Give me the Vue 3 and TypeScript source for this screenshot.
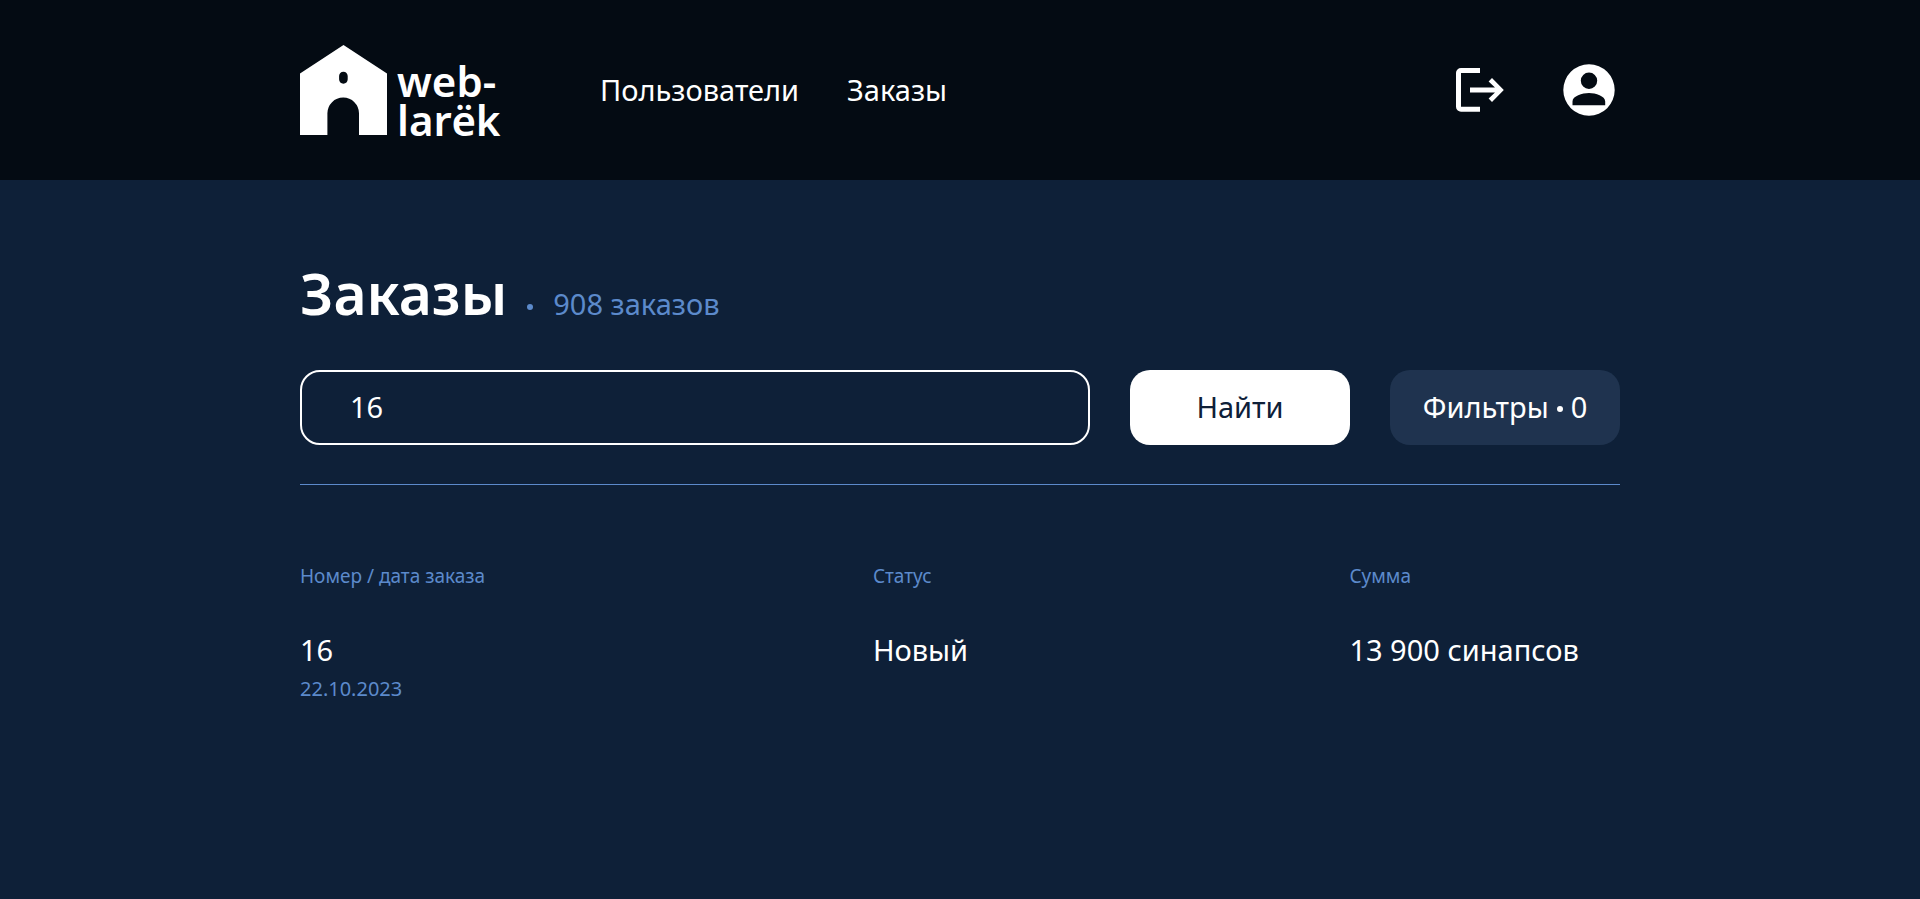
<script setup lang="ts">
import { ref } from 'vue'

interface Order {
  id: number
  date: string
  status: string
  sum: string
}

const query = ref('16')
const filtersCount = ref(0)
const total = '908 заказов'
const orders: Order[] = [
  { id: 16, date: '22.10.2023', status: 'Новый', sum: '13 900 синапсов' },
]
</script>

<template>
  <div class="page">
    <header class="header">
      <div class="container header-row">
        <a href="#" class="logo">
          <svg class="house" viewBox="0 0 87 90" aria-hidden="true">
            <path
              fill="currentColor"
              fill-rule="evenodd"
              d="M0 28.4 43.5 0 87 28.4V90H59V68.3a15.8 15.8 0 0 0-31.6 0V90H0ZM43.4 26.7c-2.5 0-4.3 1.9-4.3 4.4v3.2c0 2.5 1.8 4.4 4.3 4.4s4.3-1.9 4.3-4.4v-3.2c0-2.5-1.8-4.4-4.3-4.4Z"
            />
          </svg>
          <span class="logo-text">web-<br />larёk</span>
        </a>
        <nav class="nav">
          <a href="#users">Пользователи</a>
          <a href="#orders">Заказы</a>
        </nav>
        <div class="actions">
          <button type="button" class="icon-button" aria-label="Выйти">
            <svg viewBox="0 0 62 62" aria-hidden="true">
              <path
                fill="currentColor"
                d="M31 9v5H12v33.8h19v5H12a5 5 0 0 1-5-5V14a5 5 0 0 1 5-5ZM43 19l11.8 12L43 43l-3.4-3.5 6.4-5.9H21v-5.2h25l-6.4-5.9Z"
              />
            </svg>
          </button>
          <a href="#profile" class="icon-button" aria-label="Профиль">
            <svg viewBox="0 0 62 62" aria-hidden="true">
              <path
                fill="currentColor"
                fill-rule="evenodd"
                d="M31 5.300a25.700 25.700 0 1 0 0 51.400A25.700 25.700 0 0 0 31 5.300ZM31 13.500a8.200 8.200 0 1 1 0 16.400 8.200 8.200 0 0 1 0-16.400ZM14.500 46.300V42.500C14.500 37 24.300 34 31 34s16.200 3 16.200 8.500v3.800Z"
              />
            </svg>
          </a>
        </div>
      </div>
    </header>

    <main class="container main">
      <div class="heading">
        <h1>Заказы</h1>
        <span class="total"><span class="dot"></span>{{ total }}</span>
      </div>

      <form class="search" @submit.prevent>
        <input v-model="query" type="text" aria-label="Поиск заказа" />
        <button type="submit" class="find">Найти</button>
        <button type="button" class="filters">Фильтры<span class="dot"></span>{{ filtersCount }}</button>
      </form>

      <table class="orders">
        <thead>
          <tr>
            <th scope="col" class="col-number">Номер / дата заказа</th>
            <th scope="col" class="col-status">Статус</th>
            <th scope="col">Сумма</th>
          </tr>
        </thead>
        <tbody>
          <tr v-for="order in orders" :key="order.id">
            <td>
              <div>{{ order.id }}</div>
              <div class="date">{{ order.date }}</div>
            </td>
            <td>{{ order.status }}</td>
            <td>{{ order.sum }}</td>
          </tr>
        </tbody>
      </table>
    </main>
  </div>
</template>

<style>
body {
  margin: 0;
  background: #0e2038;
}
</style>

<style scoped>
.page {
  min-height: 100vh;
  background: #0e2038;
  color: #fff;
  font-family: "Noto Sans", "Open Sans", sans-serif;
  font-size: 29px;
  line-height: 40px;
}

a {
  color: inherit;
  text-decoration: none;
}

button,
input {
  box-sizing: border-box;
  margin: 0;
  font: inherit;
}

.container {
  box-sizing: border-box;
  width: 100%;
  max-width: 1320px;
  margin: 0 auto;
}

.header {
  background: #040b13;
}

.header-row {
  display: flex;
  align-items: center;
  min-height: 180px;
}

.logo {
  display: flex;
  align-items: flex-end;
  gap: 10px;
  width: 300px;
}

.house {
  display: block;
  width: 87px;
  height: 90px;
}

.logo-text {
  margin-bottom: -4px;
  font-size: 42px;
  font-weight: 600;
  line-height: 39px;
}

.nav {
  display: flex;
  gap: 48px;
}

.actions {
  display: flex;
  gap: 47px;
  margin-left: auto;
}

.icon-button {
  padding: 0;
  border: 0;
  background: none;
  color: #fff;
  cursor: pointer;
}

.icon-button svg {
  display: block;
  width: 62px;
  height: 62px;
}

.main {
  padding: 78px 0;
}

.heading {
  display: flex;
  align-items: baseline;
  gap: 20px;
}

h1 {
  margin: 0;
  font-size: 57px;
  font-weight: 600;
  line-height: 70px;
}

.dot {
  display: inline-block;
  width: 6px;
  height: 6px;
  border-radius: 50%;
  background: currentColor;
}

.total {
  color: #5c8acb;
}

.total .dot {
  margin-right: 20px;
  vertical-align: middle;
}

.search {
  display: flex;
  gap: 40px;
  padding: 42px 0 39px;
  border-bottom: 1px solid #5c8acb;
}

.search input {
  flex: 1;
  min-width: 0;
  height: 75px;
  padding: 0 48px 2px;
  border: 2px solid #fff;
  border-radius: 20px;
  background: transparent;
  color: #fff;
  outline: none;
}

.find,
.filters {
  height: 75px;
  padding: 0 0 2px;
  border: 0;
  border-radius: 20px;
  cursor: pointer;
}

.find {
  width: 220px;
  background: #fff;
  color: #0e2038;
}

.filters {
  display: flex;
  align-items: center;
  justify-content: center;
  gap: 8px;
  width: 230px;
  background: #1f334f;
  color: #fff;
}

.filters .dot {
  margin-top: 4px;
}

.orders {
  width: 100%;
  margin-top: 76px;
  border-collapse: collapse;
  table-layout: fixed;
}

.orders th,
.orders td {
  padding: 0;
  text-align: left;
  vertical-align: top;
}

.orders th {
  padding-bottom: 39px;
  color: #5c8acb;
  font-size: 19px;
  font-weight: 400;
  line-height: 30px;
}

.col-number {
  width: 43.4%;
}

.col-status {
  width: 36.1%;
}

.date {
  color: #5c8acb;
  font-size: 20px;
  line-height: 38px;
}
</style>
